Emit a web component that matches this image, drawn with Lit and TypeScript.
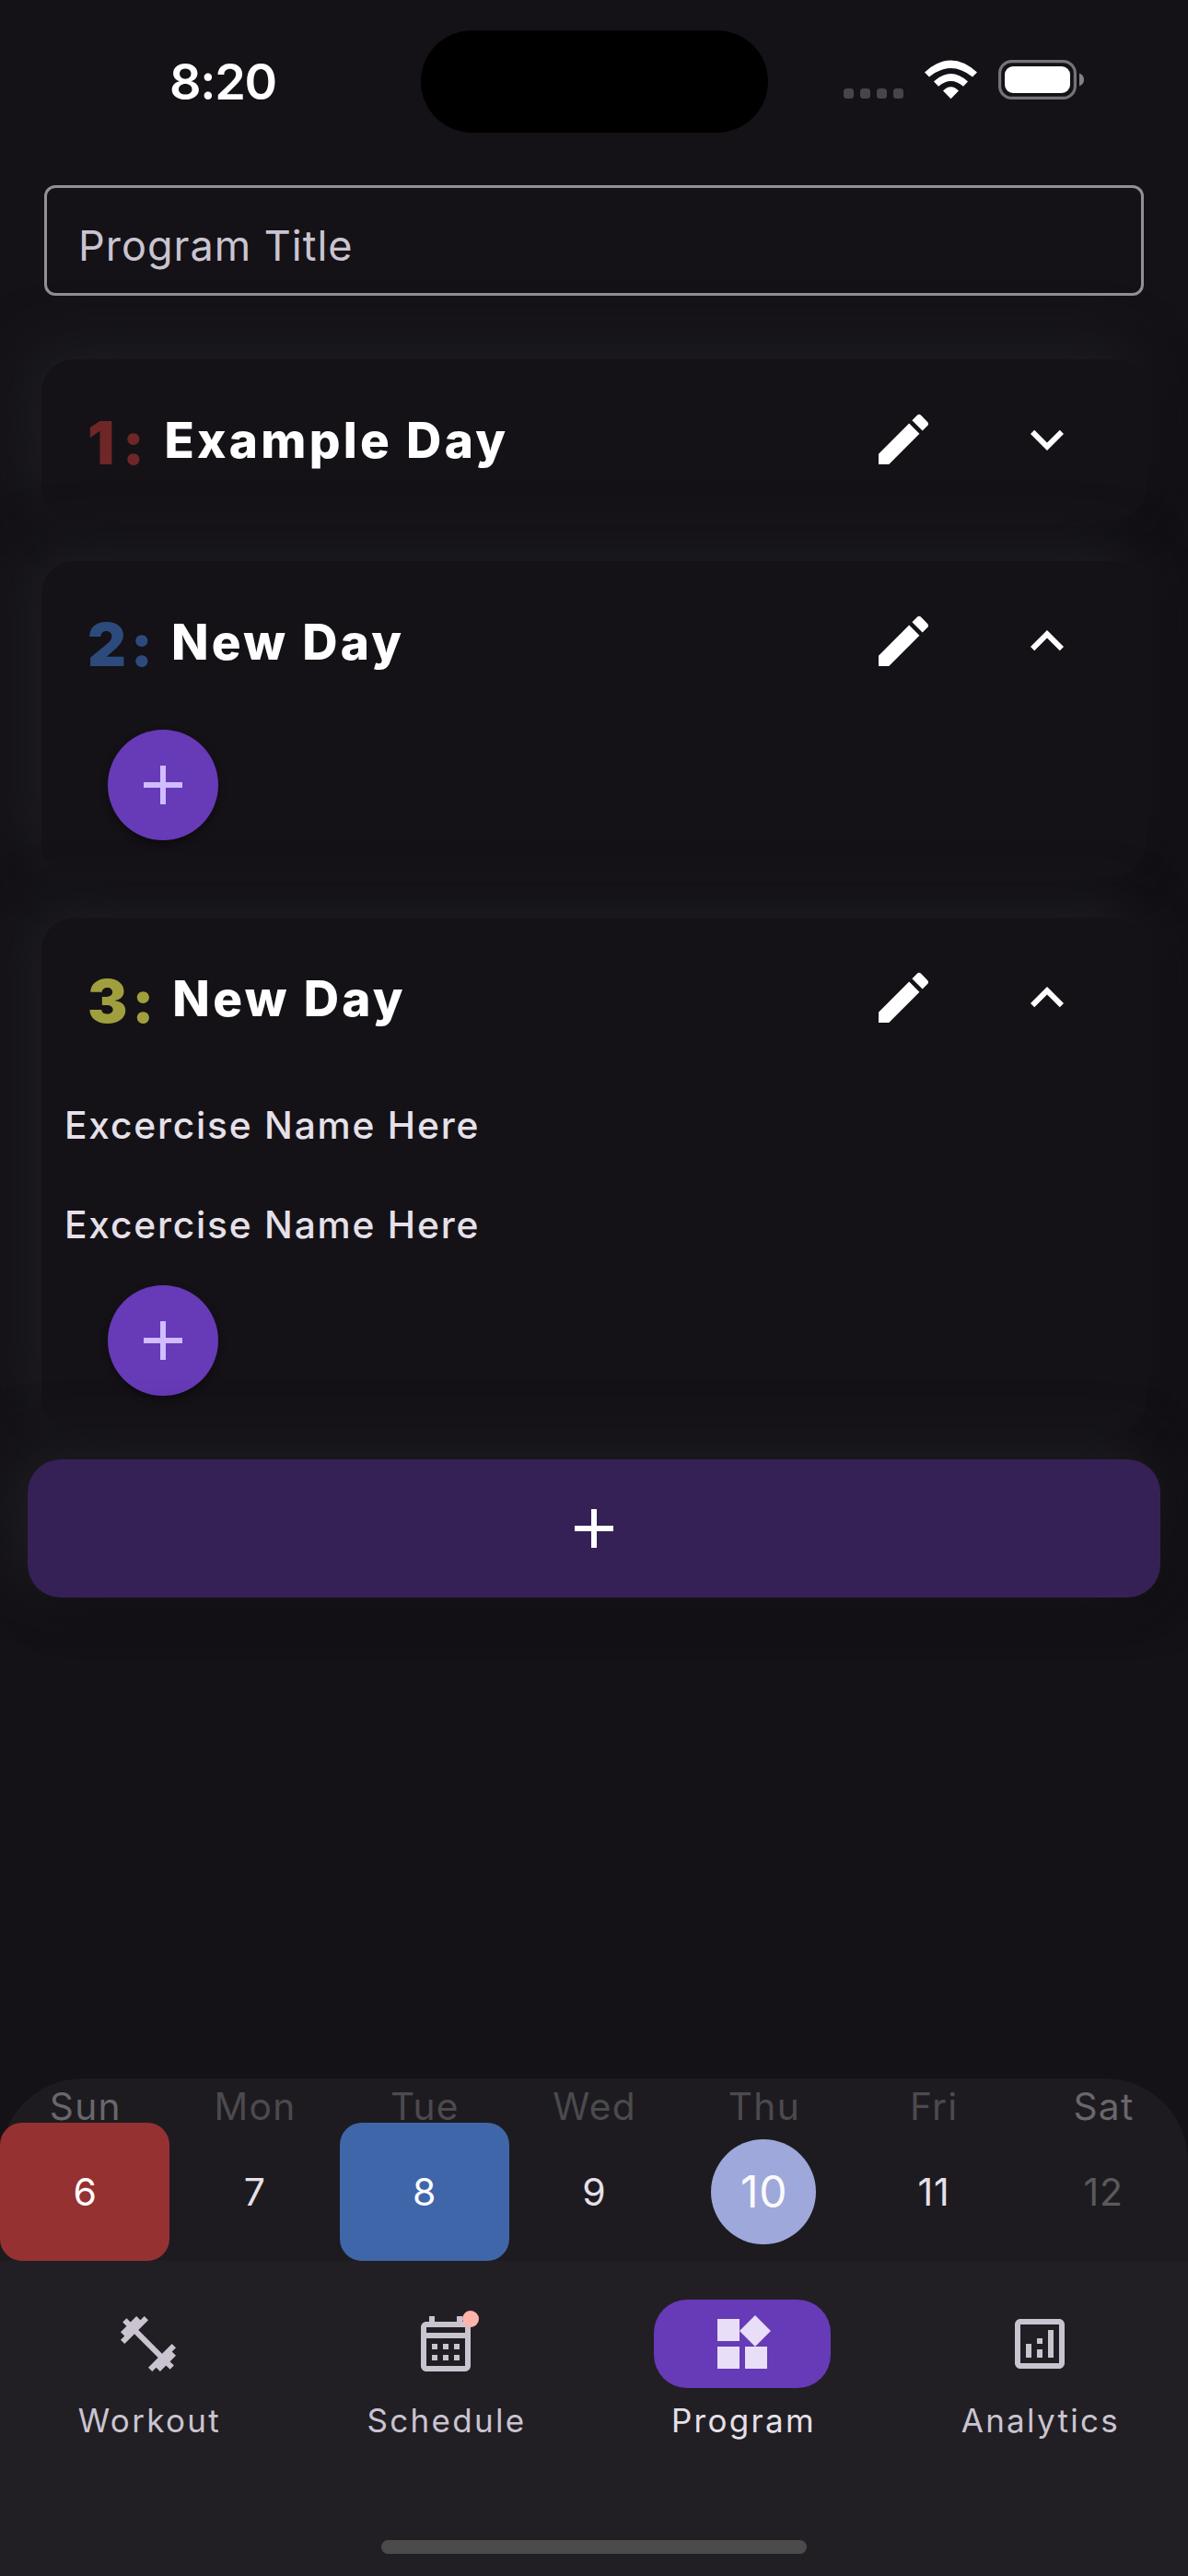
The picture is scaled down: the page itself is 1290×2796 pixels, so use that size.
import { LitElement, html, css, svg } from "lit";
import { customElement } from "lit/decorators.js";
import { classMap } from "lit/directives/class-map.js";

const PATHS = {
  edit: "M3 17.25V21h3.75L17.81 9.94l-3.75-3.75L3 17.25zM20.71 7.04c.39-.39.39-1.02 0-1.41l-2.34-2.34a.9959.9959 0 0 0-1.41 0l-1.83 1.83 3.75 3.75 1.83-1.83z",
  more: "M16.59 8.59L12 13.17 7.41 8.59 6 10l6 6 6-6z",
  add: "M19 13h-6v6h-2v-6H5v-2h6V5h2v6h6v2z",
  schedule:
    "M19 4h-1V2h-2v2H8V2H6v2H5c-1.11 0-1.99.9-1.99 2L3 20c0 1.1.89 2 2 2h14c1.1 0 2-.9 2-2V6c0-1.1-.9-2-2-2zm0 16H5V10h14v10zm0-12H5V6h14v2zM9 14H7v-2h2v2zm4 0h-2v-2h2v2zm4 0h-2v-2h2v2zm-8 4H7v-2h2v2zm4 0h-2v-2h2v2zm4 0h-2v-2h2v2z",
  program:
    "M13 13v8h8v-8h-8zM3 21h8v-8H3v8zM3 3v8h8V3H3zm13.66-1.31L11 7.34 16.66 13l5.66-5.66-5.66-5.65z",
  analytics:
    "M19 3H5c-1.1 0-2 .9-2 2v14c0 1.1.9 2 2 2h14c1.1 0 2-.9 2-2V5c0-1.1-.9-2-2-2zm0 16H5V5h14v14zM7 12h2v5H7zM15 7h2v10h-2zM11 14h2v3h-2zM11 10h2v2h-2z",
  workout:
    "M20.57 14.86L22 13.43 20.57 12 17 15.57 8.43 7 12 3.43 10.57 2 9.14 3.43 7.71 2 5.57 4.14 4.14 2.71 2.71 4.14l1.43 1.43L2 7.71l1.43 1.43L2 10.57 3.43 12 7 8.43 15.57 17 12 20.57 13.43 22l1.43-1.43L16.29 22l2.14-2.14 1.43 1.43 1.43-1.43-1.43-1.43L22 16.29z",
};

const icon = (d: string) => html`<svg class="icon" viewBox="0 0 24 24">${svg`<path d=${d}></path>`}</svg>`;

const DAYS = [
  { n: 1, tone: "red", title: "Example Day", open: false, items: [] as string[] },
  { n: 2, tone: "blue", title: "New Day", open: true, items: [] as string[] },
  { n: 3, tone: "olive", title: "New Day", open: true, items: ["Excercise Name Here", "Excercise Name Here"] },
];

const WEEK = [
  { name: "Sun", date: 6, cls: "fill-red", weekend: true },
  { name: "Mon", date: 7, cls: "", weekend: false },
  { name: "Tue", date: 8, cls: "fill-blue", weekend: false },
  { name: "Wed", date: 9, cls: "", weekend: false },
  { name: "Thu", date: 10, cls: "today", weekend: false },
  { name: "Fri", date: 11, cls: "", weekend: false },
  { name: "Sat", date: 12, cls: "muted", weekend: true },
];

const TABS = [
  { label: "Workout", icon: "workout", active: false, badge: false },
  { label: "Schedule", icon: "schedule", active: false, badge: true },
  { label: "Program", icon: "program", active: true, badge: false },
  { label: "Analytics", icon: "analytics", active: false, badge: false },
] as const;

@customElement("app-root")
export class AppRoot extends LitElement {
  static styles = css`
    :host {
      display: flex;
      flex-direction: column;
      width: 1290px;
      height: 2796px;
      overflow: hidden;
      background: #141217;
      color: #e6e0e9;
      font-family: Inter, "Liberation Sans", sans-serif;
      white-space: nowrap;
    }
    * { box-sizing: border-box; }
    .icon { width: 72px; height: 72px; fill: currentColor; display: block; flex: none; }

    .status { height: 201px; display: grid; grid-template-columns: 457px 377px 456px; flex: none; }
    .clock { padding: 56px 0 0 184px; font-size: 54px; line-height: 65px; font-weight: 600; color: #fff; letter-spacing: -1.3px; }
    .island { margin-top: 33px; height: 111px; border-radius: 56px; background: #000; }
    .signals { padding: 65px 0 0 82px; display: flex; align-items: flex-start; }
    .signals svg { display: block; }

    .field {
      flex: none; margin: 0 48px; height: 120px; border: 3px solid #938f99; border-radius: 12px;
      padding: 6px 0 0 34px; font-size: 45px; line-height: 114px; color: #cac4d0; letter-spacing: 1px;
    }
    .list { flex: none; padding: 69px 45px 0; display: flex; flex-direction: column; gap: 45px; }
    .card, .add-day { box-shadow: -15px -15px 57px 2px #1e1d21, 15px 15px 45px #100e12; }
    .card { background: #141217; border-radius: 36px; }
    .open { padding-bottom: 39px; }
    .head { height: 174px; display: flex; align-items: center; padding: 0 72px 0 50px; color: #fff; }
    .num { font-size: 65px; line-height: 78px; font-weight: 900; letter-spacing: 4.8px; padding-top: 7px; }
    .red { color: #6f2626; letter-spacing: 8.4px; margin-right: -2px; }
    .blue { color: #2d4a7c; }
    .olive { color: #a09f3e; }
    .title { font-size: 53px; line-height: 64px; font-weight: 800; letter-spacing: 3.3px; padding: 1px 0 0 15px; flex: 1; }
    .chev { margin-left: 84px; }
    .up { transform: rotate(180deg); }
    .item { height: 108px; padding-left: 25px; line-height: 103px; font-size: 40.7px; font-weight: 500; letter-spacing: 1.8px; }
    .fab {
      margin: 9px 0 0 72px; width: 120px; height: 120px; border-radius: 50%; background: #673ab7; color: #d0bcff;
      display: flex; align-items: center; justify-content: center; box-shadow: 0 4px 8px rgba(0, 0, 0, 0.4);
    }
    .add-day {
      flex: none; margin: 30px 30px 0; height: 150px; border-radius: 36px; background: #352155; color: #fff;
      display: flex; align-items: center; justify-content: center;
    }
    .sheet {
      flex: none; margin-top: auto; height: 198px; background: #1d1b20; border-radius: 90px 90px 0 0;
      display: grid; grid-template-columns: repeat(7, 1fr);
    }
    .day { display: flex; flex-direction: column; text-align: center; }
    .dow { height: 48px; line-height: 62px; font-size: 40.7px; color: #4b4a4d; letter-spacing: 1.3px; text-indent: 1.3px; }
    .weekend { color: #68676a; }
    .date { height: 150px; display: flex; align-items: center; justify-content: center; font-size: 41px; letter-spacing: 0.8px; text-indent: 0.8px; }
    .fill-red { background: #963131; border-radius: 24px; color: #fff; }
    .fill-blue { background: #3f66a9; border-radius: 24px; color: #fff; }
    .today .dot { width: 114px; height: 114px; border-radius: 50%; background: #9fa8da; color: #fafafa; font-size: 48px; line-height: 114px; }
    .muted { color: #5a595c; }

    .nav { flex: none; height: 342px; background: #211f24; display: flex; flex-direction: column; justify-content: space-between; align-items: center; }
    .tabs { width: 100%; display: grid; grid-template-columns: repeat(4, 1fr); padding-top: 42px; }
    .tab { display: flex; flex-direction: column; align-items: center; color: #cac4d0; }
    .pill { width: 192px; height: 96px; border-radius: 36px; display: flex; align-items: center; justify-content: center; }
    .glyph { position: relative; }
    .badge { position: absolute; top: 0; right: 0; width: 18px; height: 18px; border-radius: 50%; background: #ffb4ab; }
    .label { line-height: 48px; margin-top: 11px; font-size: 35px; letter-spacing: 2.3px; text-indent: 2.3px; }
    .active .pill { background: #673ab7; color: #e8def8; }
    .active .label { color: #e6e0e9; }
    .home { width: 462px; height: 15px; border-radius: 8px; background: #4b4b4b; margin-bottom: 24px; }
  `;

  private status() {
    return html`<div class="status">
      <div class="clock">8:20</div>
      <div class="island"></div>
      <div class="signals">
        <svg width="262" height="43" viewBox="0 0 262 43">
          <g fill="#464549">
            ${[0, 18, 36, 54].map((x) => svg`<rect x=${x} y="31" width="11" height="11" rx="3.5"></rect>`)}
          </g>
          <g fill="#fff">
            <path d="M88 13.500Q116.500 -12.500 145 13.500L140 18.500Q116.500 -0.500 93 18.500Z"></path>
            <path d="M98 23.500Q116.500 6.500 135 23.500L130 28.700Q116.500 17.500 103 28.700Z"></path>
            <path d="M108 33.500Q116.500 25 125 33.500L116.500 42.300Z"></path>
            <rect x="175" y="7" width="71" height="29" rx="9"></rect>
          </g>
          <rect x="169.600" y="1.600" width="81.800" height="39.800" rx="13" fill="none" stroke="#747378" stroke-width="3.200"></rect>
          <path d="M256 14.500q5 2 5 7t-5 7z" fill="#838287"></path>
        </svg>
      </div>
    </div>`;
  }

  render() {
    return html`
      ${this.status()}
      <div class="field">Program Title</div>
      <div class="list">
        ${DAYS.map(
          (d) => html`<section class=${classMap({ card: true, open: d.open })}>
            <div class="head">
              <span class="num ${d.tone}">${d.n}:</span>
              <span class="title">${d.title}</span>
              ${icon(PATHS.edit)}
              <span class=${classMap({ chev: true, up: d.open })}>${icon(PATHS.more)}</span>
            </div>
            ${d.items.map((t) => html`<div class="item">${t}</div>`)}
            ${d.open ? html`<div class="fab">${icon(PATHS.add)}</div>` : ""}
          </section>`
        )}
      </div>
      <div class="add-day">${icon(PATHS.add)}</div>
      <div class="sheet">
        ${WEEK.map(
          (w) => html`<div class="day">
            <div class=${classMap({ dow: true, weekend: w.weekend })}>${w.name}</div>
            <div class="date ${w.cls}"><span class="dot">${w.date}</span></div>
          </div>`
        )}
      </div>
      <div class="nav">
        <div class="tabs">
          ${TABS.map(
            (t) => html`<div class=${classMap({ tab: true, active: t.active })}>
              <div class="pill">
                <div class="glyph">${icon(PATHS[t.icon])}${t.badge ? html`<i class="badge"></i>` : ""}</div>
              </div>
              <div class="label">${t.label}</div>
            </div>`
          )}
        </div>
        <div class="home"></div>
      </div>
    `;
  }
}
